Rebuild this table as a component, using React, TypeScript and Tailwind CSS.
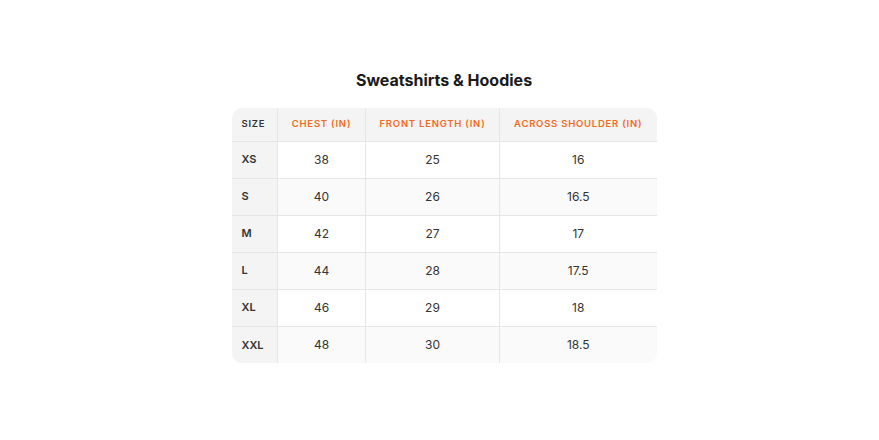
const rows = [
  ["XS", "38", "25", "16"],
  ["S", "40", "26", "16.5"],
  ["M", "42", "27", "17"],
  ["L", "44", "28", "17.5"],
  ["XL", "46", "29", "18"],
  ["XXL", "48", "30", "18.5"],
];

export default function App() {
  return (
    <div className="min-h-screen bg-white flex flex-col items-center pt-[70px] pl-[9px] font-['Inter',sans-serif]">
      <h2 className="text-[16px] leading-[20px] font-bold text-[#1a1a1a] mb-[18px]">Sweatshirts &amp; Hoodies</h2>
      <div className="rounded-[10px] overflow-hidden">
        <table className="border-collapse text-center">
          <thead>
            <tr className="bg-[#f4f4f4] h-[33px] text-[9.5px] font-semibold uppercase tracking-[0.08em]">
              <th className="w-[46px] text-left pl-[10px] text-[#333] font-semibold border-b border-[#e6e6e6]">Size</th>
              <th className="w-[88px] text-[#f26b21] font-semibold border-l border-b border-[#e6e6e6]">Chest (in)</th>
              <th className="w-[134px] text-[#f26b21] font-semibold border-l border-b border-[#e6e6e6]">Front Length (in)</th>
              <th className="w-[157px] text-[#f26b21] font-semibold border-l border-b border-[#e6e6e6]">Across Shoulder (in)</th>
            </tr>
          </thead>
          <tbody>
            {rows.map((r, i) => (
              <tr key={r[0]} className={`h-[37px] text-[12px] text-[#333] ${i % 2 === 1 ? "bg-[#fafafa]" : "bg-white"}`}>
                <td className={`text-left pl-[10px] font-semibold text-[11px] bg-[#f4f4f4] ${i < rows.length - 1 ? "border-b" : ""} border-[#e6e6e6]`}>{r[0]}</td>
                {r.slice(1).map((v, j) => (
                  <td key={j} className={`border-l ${i < rows.length - 1 ? "border-b" : ""} border-[#e6e6e6]`}>{v}</td>
                ))}
              </tr>
            ))}
          </tbody>
        </table>
      </div>
    </div>
  );
}
